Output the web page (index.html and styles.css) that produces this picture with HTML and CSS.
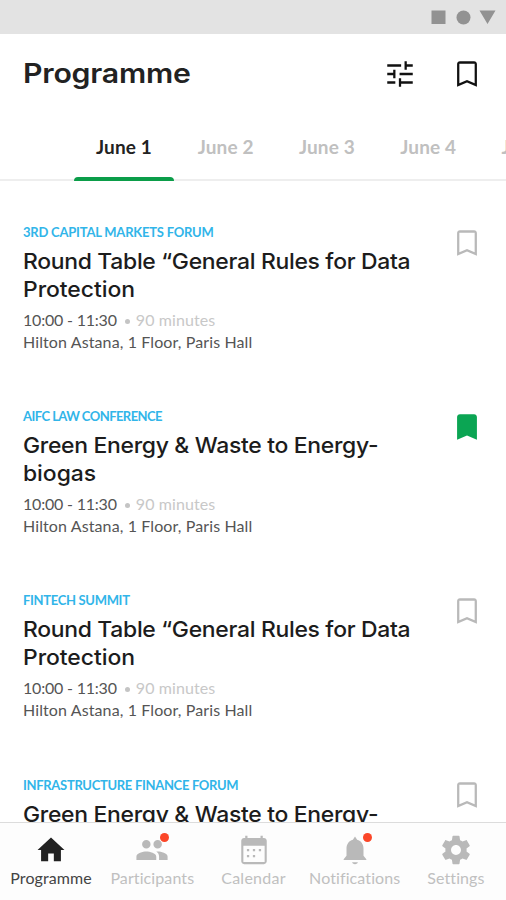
FILE: index.html
```html
<!DOCTYPE html>
<html lang="en">
<head>
<meta charset="utf-8">
<title>Programme</title>
<link rel="stylesheet" href="styles.css">
</head>
<body>
<svg width="0" height="0" class="defs">
  <symbol id="bookmark" viewBox="0 0 24 24"><path d="M17 3H7c-1.100 0-2 .9-2 2v16l7-3 7 3V5c0-1.100-.9-2-2-2zm.4 15.500L12 16.300l-5.400 2.200V4.700h10.800z"/></symbol>
  <symbol id="bookmark-full" viewBox="0 0 24 24"><path d="M17 3H7c-1.100 0-2 .9-2 2v16l7-3 7 3V5c0-1.100-.9-2-2-2z"/></symbol>
</svg>
<div class="app">
  <div class="status">
    <svg width="66" height="16" viewBox="0 0 66 16"><path d="M1.500 1.500h14v13.500h-14zM49.500 1.500h16l-8 13.500z"/><circle cx="33.500" cy="8.500" r="7"/></svg>
  </div>
  <header class="header">
    <h1>Programme</h1>
    <svg class="icon" viewBox="0 0 24 24"><path d="M3 17.200v1.600h5.700v-1.600H3zM3 5.200v1.600h9.800V5.200H3zm9.800 15.800v-2.200H21v-1.600h-8.200V15h-1.600v6h1.600zM7.200 9v2.200H3v1.600h4.200V15h1.600V9H7.200zM21 12.800v-1.600h-9.300v1.600H21zM15.200 9h1.600V6.800H21V5.200h-4.200V3h-1.600v6z"/></svg>
    <svg class="icon"><use href="#bookmark"/></svg>
  </header>
  <nav class="tabs">
    <span class="tab active">June 1</span><span class="tab">June 2</span><span class="tab">June 3</span><span class="tab">June 4</span><span class="tab">June 5</span>
  </nav>
  <main class="list">
    <article class="card">
      <div class="info">
        <div class="tag t1">3RD CAPITAL MARKETS FORUM</div>
        <h2>Round Table “General Rules for Data<br><span class="second">Protection</span></h2>
        <div class="time">10:00 - 11:30<span class="length"><i class="dot"></i>90 minutes</span></div>
        <div class="place">Hilton Astana, 1 Floor, Paris Hall</div>
      </div>
      <svg class="icon mark"><use href="#bookmark"/></svg>
    </article>
    <article class="card">
      <div class="info">
        <div class="tag t2">AIFC LAW CONFERENCE</div>
        <h2>Green Energy &amp; Waste to Energy-<br><span class="second">biogas</span></h2>
        <div class="time">10:00 - 11:30<span class="length"><i class="dot"></i>90 minutes</span></div>
        <div class="place">Hilton Astana, 1 Floor, Paris Hall</div>
      </div>
      <svg class="icon mark saved"><use href="#bookmark-full"/></svg>
    </article>
    <article class="card">
      <div class="info">
        <div class="tag t3">FINTECH SUMMIT</div>
        <h2>Round Table “General Rules for Data<br><span class="second">Protection</span></h2>
        <div class="time">10:00 - 11:30<span class="length"><i class="dot"></i>90 minutes</span></div>
        <div class="place">Hilton Astana, 1 Floor, Paris Hall</div>
      </div>
      <svg class="icon mark"><use href="#bookmark"/></svg>
    </article>
    <article class="card">
      <div class="info">
        <div class="tag t4">INFRASTRUCTURE FINANCE FORUM</div>
        <h2>Green Energy &amp; Waste to Energy-</h2>
      </div>
      <svg class="icon mark"><use href="#bookmark"/></svg>
    </article>
  </main>
  <nav class="bottom">
    <div class="item current">
      <svg class="icon" viewBox="0 0 24 24"><path d="M10 20v-5.500h4V20h5v-8h2.500L12 3.200 2.500 12H5v8z"/></svg>
      <span class="n1">Programme</span>
    </div>
    <div class="item">
      <svg class="icon" viewBox="0 0 24 24"><path d="M16 11c1.660 0 2.990-1.340 2.990-3S17.660 5 16 5s-3 1.340-3 3 1.340 3 3 3zm-8 0c1.660 0 2.990-1.340 2.990-3S9.660 5 8 5 5 6.340 5 8s1.340 3 3 3zm0 2c-2.330 0-7 1.170-7 3.500V19h14v-2.500C15 14.170 10.330 13 8 13zm8 0c-.29 0-.62.020-.97.050 1.160.84 1.970 1.970 1.970 3.450V19h6v-2.500c0-2.330-4.670-3.500-7-3.500z"/></svg>
      <i class="badge"></i>
      <span>Participants</span>
    </div>
    <div class="item">
      <svg class="icon" viewBox="0 0 24 24"><path d="M19 3.500h-.8V2h-1.600v1.500H7.400V2H5.800v1.500H5c-1.100 0-2 .9-2 2V20c0 1.100.9 2 2 2h14c1.100 0 2-.9 2-2V5.500c0-1.100-.9-2-2-2zm.5 17H4.500V9h15zM7 11.300h1.600v1.600H7zm4.200 0h1.600v1.600h-1.600zm4.200 0H17v1.600h-1.600zM7 15.500h1.600v1.600H7zm4.200 0h1.600v1.600h-1.600z"/></svg>
      <span class="n3">Calendar</span>
    </div>
    <div class="item">
      <svg class="icon" viewBox="0 0 24 24"><path d="M12 22c1.100 0 2-.7 2-1.300h-4c0 .6.900 1.300 2 1.300zm6-6v-5c0-3.070-1.640-5.640-4.500-6.320L12 2.500l-1.500 2.180C7.630 5.360 6 7.920 6 11v5l-2 2.500V19h16v-.5z"/></svg>
      <i class="badge"></i>
      <span>Notifications</span>
    </div>
    <div class="item">
      <svg class="icon" viewBox="0 0 24 24"><path d="M19.430 12.980c.04-.32.070-.64.070-.98s-.03-.66-.07-.98l2.110-1.650c.19-.15.240-.42.120-.64l-2-3.460c-.12-.22-.39-.3-.61-.22l-2.490 1c-.52-.4-1.080-.73-1.690-.98l-.38-2.650C14.460 2.180 14.250 2 14 2h-4c-.25 0-.46.180-.49.420l-.38 2.650c-.61.250-1.170.590-1.690.98l-2.490-1c-.23-.09-.49 0-.61.220l-2 3.460c-.13.220-.07.490.12.640l2.110 1.650c-.04.320-.07.650-.07.980s.03.660.07.980l-2.110 1.650c-.19.150-.24.420-.12.640l2 3.460c.12.220.39.300.61.220l2.490-1c.52.400 1.080.730 1.690.980l.38 2.650c.03.240.24.420.49.420h4c.25 0 .46-.18.490-.42l.38-2.650c.61-.25 1.170-.59 1.690-.98l2.490 1c.23.090.49 0 .61-.22l2-3.460c.12-.22.070-.49-.12-.64zM12 15.500c-1.930 0-3.500-1.570-3.500-3.500s1.570-3.500 3.500-3.500 3.500 1.570 3.500 3.500-1.570 3.500-3.500 3.500z"/></svg>
      <span>Settings</span>
    </div>
  </nav>
</div>
</body>
</html>
```
FILE: styles.css
```css
* { box-sizing: border-box; }
body { margin: 0; background: #fff; font-family: Lato, sans-serif; }
.defs { display: block; position: absolute; }
.app { width: 506px; height: 900px; display: flex; flex-direction: column; overflow: hidden; }
.status { height: 34px; flex: none; background: #e3e3e3; display: flex; justify-content: flex-end; padding: 9px 10px 0 0; fill: #929292; }
.icon { width: 34px; height: 34px; display: block; fill: currentColor; flex: none; }
.header { height: 80px; flex: none; display: flex; align-items: center; gap: 33px; padding: 0 22px 0 23px; color: #111; }
h1 { margin: 0 auto 0 0; font: 600 27px/34px Inter, sans-serif; letter-spacing: -0.200px; color: #222; white-space: nowrap; transform: scaleX(1.120); transform-origin: left; }
.tabs { height: 67px; flex: none; display: flex; padding-left: 74px; background: linear-gradient(#eee, #eee) bottom / 100% 2px no-repeat; overflow: hidden; }
.tab { flex: 0 0 101.300px; height: 67px; padding-left: 2px; text-align: center; font-weight: 700; font-size: 19px; line-height: 66px; letter-spacing: 0.150px; color: #c0c0c0; white-space: nowrap; }
.active { position: relative; padding-left: 0; color: #222; flex-basis: 100px; }
.active::after { content: ""; position: absolute; left: 0; right: 0; bottom: 0; height: 4px; border-radius: 4px 4px 0 0; background: #0b9d49; }
.list { flex: 1; min-height: 0; overflow: hidden; padding: 41px 22px 0 23px; }
.card { height: 184.200px; display: flex; justify-content: space-between; }
.info { white-space: nowrap; }
.tag { font-size: 13px; font-weight: 700; line-height: 20px; color: #31b5e9; }
.t1 { letter-spacing: -0.220px; }
.t2 { letter-spacing: -0.550px; }
.t3 { letter-spacing: -0.320px; }
.t4 { letter-spacing: -0.310px; }
h2 { margin: 5px 0 6px; font: 500 22px/28px Inter, sans-serif; letter-spacing: -0.300px; color: #1c1c1c; transform: scaleX(1.042); transform-origin: left; }
.second { letter-spacing: -0.050px; }
.time, .place { font-size: 16px; line-height: 22px; color: #555; }
.time { letter-spacing: -0.200px; }
.place { letter-spacing: 0.110px; }
.length { color: #c8c8c8; letter-spacing: 0.100px; }
.dot { display: inline-block; width: 5px; height: 5px; border-radius: 50%; background: #c4c4c4; margin: 0 6px 2px 8px; }
.mark { margin-top: 3.500px; color: #b9b9b9; }
.saved { color: #0ba553; }
.bottom { height: 78px; flex: none; display: flex; border-top: 1px solid #dcdcdc; background: #fdfdfd; }
.item { flex: 1 1 0; min-width: 0; position: relative; display: flex; flex-direction: column; align-items: center; padding: 10px 0 0 1px; color: #b9b9b9; }
.item span { font-size: 16px; line-height: 22px; letter-spacing: 0.100px; white-space: nowrap; color: #c0c0c0; }
.item .n3 { letter-spacing: 0.250px; }
.item.current { color: #222; }
.item.current span { color: #444; }
.badge { position: absolute; left: 59px; top: 10px; width: 9px; height: 9px; border-radius: 50%; background: #fb4628; }
```
